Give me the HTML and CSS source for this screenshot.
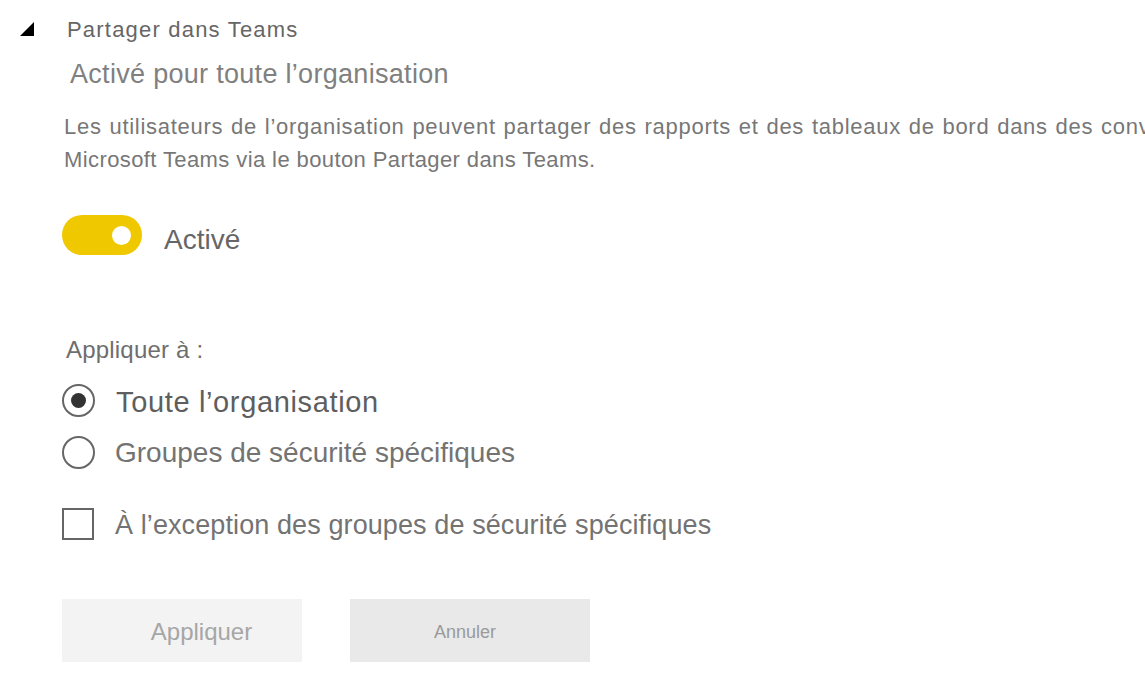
FILE: index.html
```html
<!DOCTYPE html>
<html lang="fr">
<head>
<meta charset="utf-8">
<title>Partager dans Teams</title>
<link rel="stylesheet" href="styles.css">
</head>
<body>
<div class="page">
  <div class="header">
    <svg class="caret" width="15" height="15" viewBox="0 0 15 15"><polygon points="15,0 15,14 1,14" fill="#000"/></svg>
    <span class="title">Partager dans Teams</span>
  </div>
  <div class="content">
    <div class="subtitle">Activé pour toute l’organisation</div>
    <div class="desc">
      <div class="line line-1">Les utilisateurs de l’organisation peuvent partager des rapports et des tableaux de bord dans des conversations</div>
      <div class="line">Microsoft Teams via le bouton Partager dans Teams.</div>
    </div>
    <div class="toggle-row">
      <div class="toggle"><span class="knob"></span></div>
      <span class="toggle-label">Activé</span>
    </div>
    <div class="apply-label">Appliquer à :</div>
    <div class="option first">
      <span class="radio checked"><span class="dot"></span></span>
      <span class="opt-label selected">Toute l’organisation</span>
    </div>
    <div class="option second">
      <span class="radio"></span>
      <span class="opt-label">Groupes de sécurité spécifiques</span>
    </div>
    <div class="option check">
      <span class="checkbox"></span>
      <span class="opt-label except">À l’exception des groupes de sécurité spécifiques</span>
    </div>
    <div class="buttons">
      <div class="btn btn-apply">Appliquer</div>
      <div class="btn btn-cancel">Annuler</div>
    </div>
  </div>
</div>
</body>
</html>
```

FILE: styles.css
```css
html, body {
  margin: 0;
  padding: 0;
  background: #ffffff;
  overflow: hidden;
}
body {
  font-family: "Liberation Sans", Arial, sans-serif;
  width: 1145px;
  height: 695px;
}
.page {
  padding-top: 16px;
}
.header {
  display: flex;
  align-items: center;
  height: 28px;
}
.caret {
  margin-left: 19px;
  margin-top: -2px;
  flex: none;
}
.title {
  margin-left: 33px;
  font-size: 22px;
  letter-spacing: 1.2px;
  color: #666666;
  line-height: 28px;
  white-space: nowrap;
}
.content {
  padding-left: 62px;
  display: flex;
  flex-direction: column;
}
.subtitle {
  margin-top: 14px;
  margin-left: 8px;
  font-size: 27px;
  letter-spacing: 0.3px;
  line-height: 32px;
  color: #808080;
  white-space: nowrap;
}
.desc {
  margin-top: 20px;
  margin-left: 2px;
  font-size: 22px;
  letter-spacing: 0.4px;
  line-height: 33px;
  color: #777777;
  white-space: nowrap;
  overflow: hidden;
}
.line-1 {
  letter-spacing: 0.72px;
  word-spacing: 1px;
}
.toggle-row {
  margin-top: 39px;
  display: flex;
  align-items: center;
  height: 40px;
}
.toggle {
  width: 80px;
  height: 40px;
  border-radius: 20px;
  background: #efc800;
  display: flex;
  align-items: center;
  justify-content: flex-end;
  padding-right: 11px;
  box-sizing: border-box;
}
.knob {
  width: 19px;
  height: 19px;
  border-radius: 50%;
  background: #ffffff;
}
.toggle-label {
  margin-left: 22px;
  padding-top: 9px;
  font-size: 28px;
  line-height: 32px;
  color: #666666;
}
.apply-label {
  margin-top: 81px;
  margin-left: 4px;
  font-size: 24px;
  letter-spacing: 0.2px;
  line-height: 28px;
  color: #6e6e6e;
}
.option {
  display: flex;
  align-items: center;
}
.option.first {
  margin-top: 20px;
  height: 33px;
}
.option.second {
  margin-top: 19px;
  height: 33px;
}
.option.check {
  margin-top: 39px;
  height: 32px;
}
.radio {
  width: 33px;
  height: 33px;
  border: 2px solid #666666;
  border-radius: 50%;
  box-sizing: border-box;
  display: flex;
  align-items: center;
  justify-content: center;
  flex: none;
}
.dot {
  width: 15px;
  height: 15px;
  border-radius: 50%;
  background: #333333;
}
.checkbox {
  width: 32px;
  height: 32px;
  border: 2px solid #666666;
  box-sizing: border-box;
  flex: none;
}
.opt-label {
  margin-left: 20px;
  font-size: 28px;
  line-height: 34px;
  color: #737373;
  white-space: nowrap;
}
.opt-label.selected {
  margin-left: 21px;
  padding-top: 3px;
  font-size: 29px;
  letter-spacing: 0.65px;
  color: #5e5e5e;
}
.opt-label.except {
  margin-left: 21px;
  padding-top: 2px;
  font-size: 27px;
  letter-spacing: 0.1px;
}
.buttons {
  margin-top: 59px;
  display: flex;
  gap: 48px;
}
.btn {
  width: 240px;
  height: 63px;
  display: flex;
  align-items: center;
  justify-content: center;
  box-sizing: border-box;
  padding-top: 3px;
}
.btn-apply {
  background: #f3f3f3;
  color: #a6a6a6;
  font-size: 24px;
  padding-left: 39px;
}
.btn-cancel {
  background: #e9e9e9;
  color: #9a9a9a;
  font-size: 18px;
  padding-right: 10px;
}
```
